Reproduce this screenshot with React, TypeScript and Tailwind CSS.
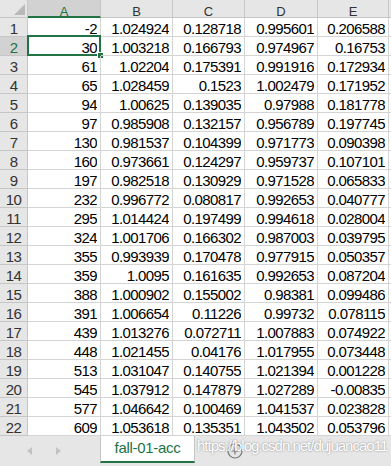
import React from "react"

// sheet data, one row per line: A..E
const rows: string[][] = [
  ["-2", "1.024924", "0.128718", "0.995601", "0.206588"],
  ["30", "1.003218", "0.166793", "0.974967", "0.16753"],
  ["61", "1.02204", "0.175391", "0.991916", "0.172934"],
  ["65", "1.028459", "0.1523", "1.002479", "0.171952"],
  ["94", "1.00625", "0.139035", "0.97988", "0.181778"],
  ["97", "0.985908", "0.132157", "0.956789", "0.197745"],
  ["130", "0.981537", "0.104399", "0.971773", "0.090398"],
  ["160", "0.973661", "0.124297", "0.959737", "0.107101"],
  ["197", "0.982518", "0.130929", "0.971528", "0.065833"],
  ["232", "0.996772", "0.080817", "0.992653", "0.040777"],
  ["295", "1.014424", "0.197499", "0.994618", "0.028004"],
  ["324", "1.001706", "0.166302", "0.987003", "0.039795"],
  ["355", "0.993939", "0.170478", "0.977915", "0.050357"],
  ["359", "1.0095", "0.161635", "0.992653", "0.087204"],
  ["388", "1.000902", "0.155002", "0.98381", "0.099486"],
  ["391", "1.006654", "0.11226", "0.99732", "0.078115"],
  ["439", "1.013276", "0.072711", "1.007883", "0.074922"],
  ["448", "1.021455", "0.04176", "1.017955", "0.073448"],
  ["513", "1.031047", "0.140755", "1.021394", "0.001228"],
  ["545", "1.037912", "0.147879", "1.027289", "-0.00835"],
  ["577", "1.046642", "0.100469", "1.041537", "0.023828"],
  ["609", "1.053618", "0.135351", "1.043502", "0.053796"],
]

const cols = ["A", "B", "C", "D", "E"]

function Corner() {
  return (
    <div className="relative h-[18px] bg-[#e6e6e6] border-r border-b border-[#c6c6c6]">
      <svg className="absolute right-[2px] bottom-[2px]" width="11" height="11" viewBox="0 0 11 11">
        <path d="M11 0 L11 11 L0 11 Z" fill="#b9b9b9" />
      </svg>
    </div>
  )
}

function ColHeader({ label }: { label: string }) {
  if (label === "A") {
    return (
      <div className="h-[18px] bg-[#d2d2d2] border-r border-b-2 border-r-[#c6c6c6] border-b-[#217346] text-center text-[13px] leading-[23px] text-[#217346] overflow-hidden">
        {label}
      </div>
    )
  }
  return (
    <div className="h-[18px] bg-[#e6e6e6] border-r border-b border-[#c6c6c6] text-center text-[13px] leading-[24px] text-[#333] overflow-hidden">
      {label}
    </div>
  )
}

export default function App() {
  return (
    <div className="w-[391px] h-[466px] overflow-hidden bg-white relative font-['Liberation_Sans',Arial,sans-serif]">
      <div className="grid grid-cols-[28px_73px_72px_72px_73px_71px_1fr]">
        <Corner />
        {cols.map((c) => (
          <ColHeader key={c} label={c} />
        ))}
        <div className="h-[18px] bg-[#e6e6e6] border-b border-[#c6c6c6]" />

        {rows.map((r, i) => (
          <React.Fragment key={i}>
            {i === 1 ? (
              <div className="h-[19px] bg-[#d2d2d2] border-r border-b border-[#c6c6c6] text-center text-[15px] tracking-[-0.6px] leading-[22px] text-[#217346] overflow-hidden">
                {i + 1}
              </div>
            ) : (
              <div className="h-[19px] bg-[#e6e6e6] border-r border-b border-[#c6c6c6] text-center text-[15px] tracking-[-0.6px] leading-[22px] text-[#333] overflow-hidden">
                {i + 1}
              </div>
            )}
            {r.map((v, j) => (
              <div
                key={j}
                className="relative h-[19px] border-r border-b border-[#d4d4d4] pr-[3px] text-right text-[15px] tracking-[-0.6px] leading-[22px] text-black"
              >
                <span className="block h-full overflow-hidden">{v}</span>
                {i === 1 && j === 0 && (
                  <>
                    <div className="absolute -left-[1px] -top-[2px] -right-[1px] -bottom-[1px] border-2 border-[#217346]" />
                    <div className="absolute -right-[4px] -bottom-[4px] w-[7px] h-[7px] bg-[#217346] border border-white" />
                  </>
                )}
              </div>
            ))}
            <div className="h-[19px] border-b border-[#d4d4d4]" />
          </React.Fragment>
        ))}
      </div>

      {/* sheet tabs */}
      <div className="flex h-[30px] bg-[#e6e6e6]">
        <div className="w-[100px] flex items-center">
          <svg className="ml-[27px]" width="5" height="8" viewBox="0 0 5 8">
            <path d="M5 0 L0 4 L5 8 Z" fill="#c2c2c2" />
          </svg>
          <svg className="ml-[24px]" width="5" height="8" viewBox="0 0 5 8">
            <path d="M0 0 L5 4 L0 8 Z" fill="#c2c2c2" />
          </svg>
        </div>
        <div className="w-[95px] h-[27px] bg-white border-x border-[#c6c6c6] border-b-2 border-b-[#217346] flex items-center justify-center text-[15px] tracking-[-0.3px] text-[#217346]">
          fall-01-acc
        </div>
        <div className="flex items-center ml-[32px]">
          <svg width="16" height="16" viewBox="0 0 16 16">
            <circle cx="8" cy="8" r="7" fill="none" stroke="#7a7a7a" strokeWidth="1.2" />
            <path d="M8 4.5 V11.5 M4.5 8 H11.5" stroke="#7a7a7a" strokeWidth="1.2" />
          </svg>
        </div>
      </div>

      {/* watermark */}
      <div className="absolute left-[197px] top-[438px] text-[15px] leading-[15px] tracking-[-1px] text-white [text-shadow:0_0_2px_rgba(0,0,0,0.45)] whitespace-nowrap">
        https://blog.csdn.net/dujuancao11
      </div>
    </div>
  )
}
